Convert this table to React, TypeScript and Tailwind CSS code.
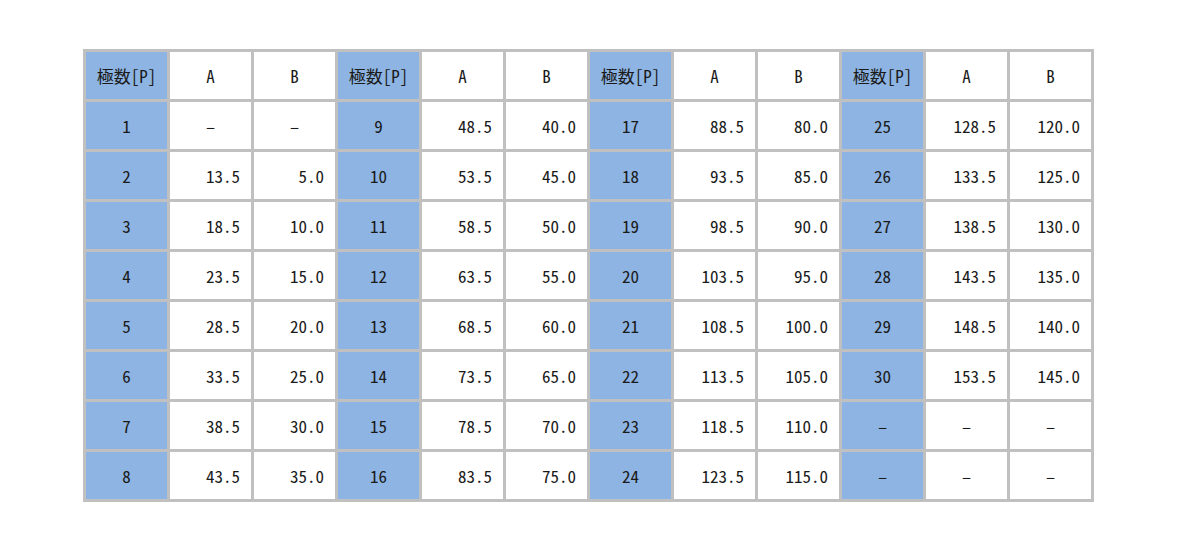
const groups = [0, 1, 2, 3]
const rows = [1, 2, 3, 4, 5, 6, 7, 8]

function cellsFor(p: number) {
  if (p === 1) return { p: "1", a: "–", b: "–" }
  if (p > 30) return { p: "–", a: "–", b: "–" }
  return { p: String(p), a: (p * 5 + 3.5).toFixed(1), b: (p * 5 - 5).toFixed(1) }
}

export default function App() {
  return (
    <div className="w-full min-h-[551px] bg-white pt-[49px]">
      <div
        className="mx-auto grid w-fit grid-cols-[repeat(12,81px)] auto-rows-[47px] gap-[3px] bg-[#c0c0c0] p-[3px] text-[17px] font-[350] text-[#1a1a1a]"
        style={{ fontFamily: '"Noto Sans Mono CJK JP", "Noto Sans CJK JP", "Liberation Mono", monospace' }}
      >
        {groups.map((g) => (
          <HeaderGroup key={`h${g}`} />
        ))}
        {rows.map((r) =>
          groups.map((g) => {
            const c = cellsFor(g * 8 + r)
            const dash = c.a === "–"
            return <Row key={`${r}-${g}`} p={c.p} a={c.a} b={c.b} dash={dash} />
          })
        )}
      </div>
    </div>
  )
}

function HeaderGroup() {
  return (
    <>
      <div className="flex items-center justify-center bg-[#8db4e2]">極数[P]</div>
      <div className="flex items-center justify-center bg-white">A</div>
      <div className="flex items-center justify-center bg-white">B</div>
    </>
  )
}

function Row({ p, a, b, dash }: { p: string; a: string; b: string; dash: boolean }) {
  const valueCls = dash
    ? "flex items-center justify-center bg-white"
    : "flex items-center justify-end bg-white pr-[11px]"
  return (
    <>
      <div className="flex items-center justify-center bg-[#8db4e2]">{p}</div>
      <div className={valueCls}>{a}</div>
      <div className={valueCls}>{b}</div>
    </>
  )
}
